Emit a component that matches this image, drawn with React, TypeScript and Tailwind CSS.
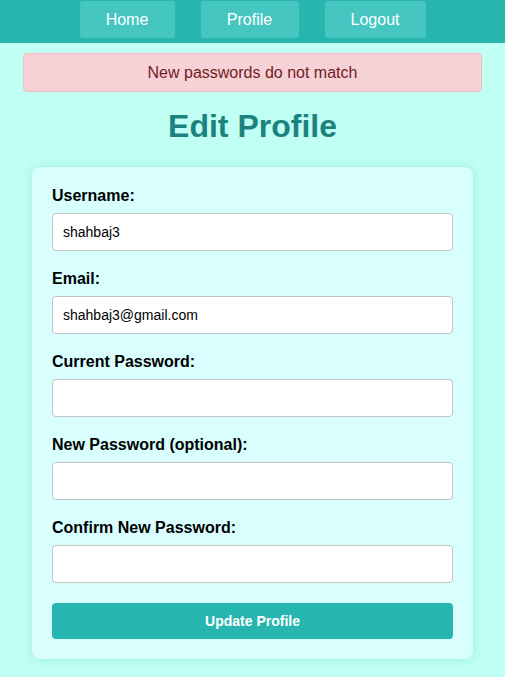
const fields = [
  { label: 'Username:', type: 'text', value: 'shahbaj3' },
  { label: 'Email:', type: 'email', value: 'shahbaj3@gmail.com' },
  { label: 'Current Password:', type: 'password', value: '' },
  { label: 'New Password (optional):', type: 'password', value: '' },
  { label: 'Confirm New Password:', type: 'password', value: '' },
];

const navLinks = [
  { label: 'Home', w: 'w-[95px]' },
  { label: 'Profile', w: 'w-[98px]' },
  { label: 'Logout', w: 'w-[101px]' },
];

export default function App() {
  return (
    <div className="min-h-[677px] bg-[#bffff4] font-['Liberation_Sans',Arial,sans-serif] text-black">
      <nav className="flex h-[43px] justify-center gap-[26px] bg-[#28b5b0] pt-px">
        {navLinks.map((l) => (
          <a
            key={l.label}
            href="#"
            className={`flex h-[37px] ${l.w} items-center justify-center rounded-[3px] bg-[#45c6c1] text-base text-white`}
          >
            {l.label}
          </a>
        ))}
      </nav>

      <div className="mx-[23px] mt-[10px] flex h-[39px] items-center justify-center rounded-[4px] border border-[#f3bcc4] bg-[#f6d1d6] text-base text-[#721c24]">
        New passwords do not match
      </div>

      <h1 className="mt-[14px] text-center text-[32px] leading-[40px] font-bold text-[#1c827e]">
        Edit Profile
      </h1>

      <form className="mx-[32px] mt-[21px] flex flex-col rounded-[8px] bg-[#d8fffe] p-5 shadow-[0_0_10px_rgba(0,150,140,0.18)]">
        {fields.map((f) => (
          <div key={f.label} className="mb-[19px] flex flex-col">
            <label className="mb-2 text-base leading-[18px] font-bold">{f.label}</label>
            <input
              type={f.type}
              defaultValue={f.value}
              className="h-[38px] rounded-[4px] border border-[#c4c4c4] bg-white px-[10px] text-sm text-black outline-none"
            />
          </div>
        ))}
        <button
          type="button"
          className="mt-px h-[36px] rounded-[4px] bg-[#27b5b0] text-sm font-bold text-white"
        >
          Update Profile
        </button>
      </form>
    </div>
  );
}
